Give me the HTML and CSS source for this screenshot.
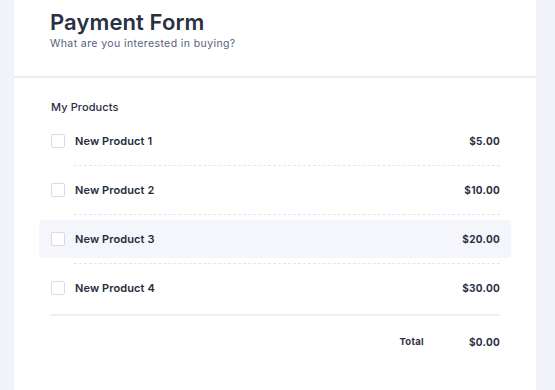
FILE: index.html
```html
<!DOCTYPE html>
<html lang="en">
<head>
<meta charset="utf-8">
<title>Payment Form</title>
<link rel="stylesheet" href="styles.css">
</head>
<body>
<div class="page">
  <div class="card">
    <header class="card-header">
      <h1 class="title">Payment Form</h1>
      <p class="subtitle">What are you interested in buying?</p>
    </header>
    <section class="card-body">
      <div class="section-label">My Products</div>
      <ul class="products">
        <li class="product">
          <span class="check"></span>
          <span class="name">New Product 1</span>
          <span class="price">$5.00</span>
        </li>
        <li class="sep"></li>
        <li class="product">
          <span class="check"></span>
          <span class="name">New Product 2</span>
          <span class="price">$10.00</span>
        </li>
        <li class="sep"></li>
        <li class="product is-hover">
          <span class="check"></span>
          <span class="name">New Product 3</span>
          <span class="price">$20.00</span>
        </li>
        <li class="sep"></li>
        <li class="product">
          <span class="check"></span>
          <span class="name">New Product 4</span>
          <span class="price">$30.00</span>
        </li>
      </ul>
      <div class="total-line"></div>
      <div class="total">
        <span class="total-label">Total</span>
        <span class="total-value">$0.00</span>
      </div>
    </section>
  </div>
</div>
</body>
</html>
```

FILE: styles.css
```css
* { box-sizing: border-box; }
html, body {
  margin: 0;
  padding: 0;
  height: 100%;
  background: #f2f2fb;
  font-family: Inter, "Open Sans", sans-serif;
  color: #2a3042;
}
.page {
  padding: 0 19px 0 14px;
  height: 100%;
}
.card {
  background: #ffffff;
  height: 100%;
  min-height: 390px;
}
.card-header {
  padding: 8px 36px 0 36px;
  height: 78px;
  border-bottom: 2px solid #ececf3;
}
.title {
  margin: 0;
  font-size: 22px;
  line-height: 28px;
  font-weight: 600;
  color: #283044;
  letter-spacing: 0.1px;
}
.subtitle {
  margin: 1px 0 0 0;
  font-size: 10.5px;
  line-height: 14px;
  color: #56617f;
  letter-spacing: 0.4px;
}
.card-body {
  padding: 22px 25px 0 25px;
}
.section-label {
  padding-left: 12px;
  font-size: 11px;
  line-height: 14px;
  font-weight: 500;
  color: #2a3042;
  margin-bottom: 8px;
  letter-spacing: 0.1px;
}
.products {
  list-style: none;
  margin: 0;
  padding: 0;
}
.product {
  display: flex;
  align-items: center;
  height: 38px;
  padding: 0 11px 0 12px;
  border-radius: 3px;
}
.product.is-hover {
  background: #f5f6fb;
}
.check {
  width: 14px;
  height: 14px;
  border: 1px solid #d8dbe4;
  border-radius: 2px;
  background: #fff;
  flex: none;
}
.name {
  margin-left: 10px;
  font-size: 11px;
  font-weight: 600;
  color: #262d3d;
  flex: 1;
  letter-spacing: 0.1px;
}
.price {
  font-size: 10px;
  font-weight: 700;
  color: #2a3042;
  letter-spacing: 0.3px;
}
.sep {
  margin: 5px 11px 5px 35px;
  border-top: 1px dashed #e4e6ec;
}
.total-line {
  margin: 7px 11px 0 11px;
  border-top: 2px solid #eff0f4;
}
.total {
  display: flex;
  justify-content: flex-end;
  align-items: center;
  gap: 45px;
  margin-top: 19px;
  padding-right: 11px;
  line-height: 14px;
}
.total-label {
  font-size: 9.5px;
  font-weight: 700;
  color: #2a3042;
  letter-spacing: 0.3px;
}
.total-value {
  font-size: 10px;
  font-weight: 700;
  color: #2a3042;
  letter-spacing: 0.3px;
}
```
